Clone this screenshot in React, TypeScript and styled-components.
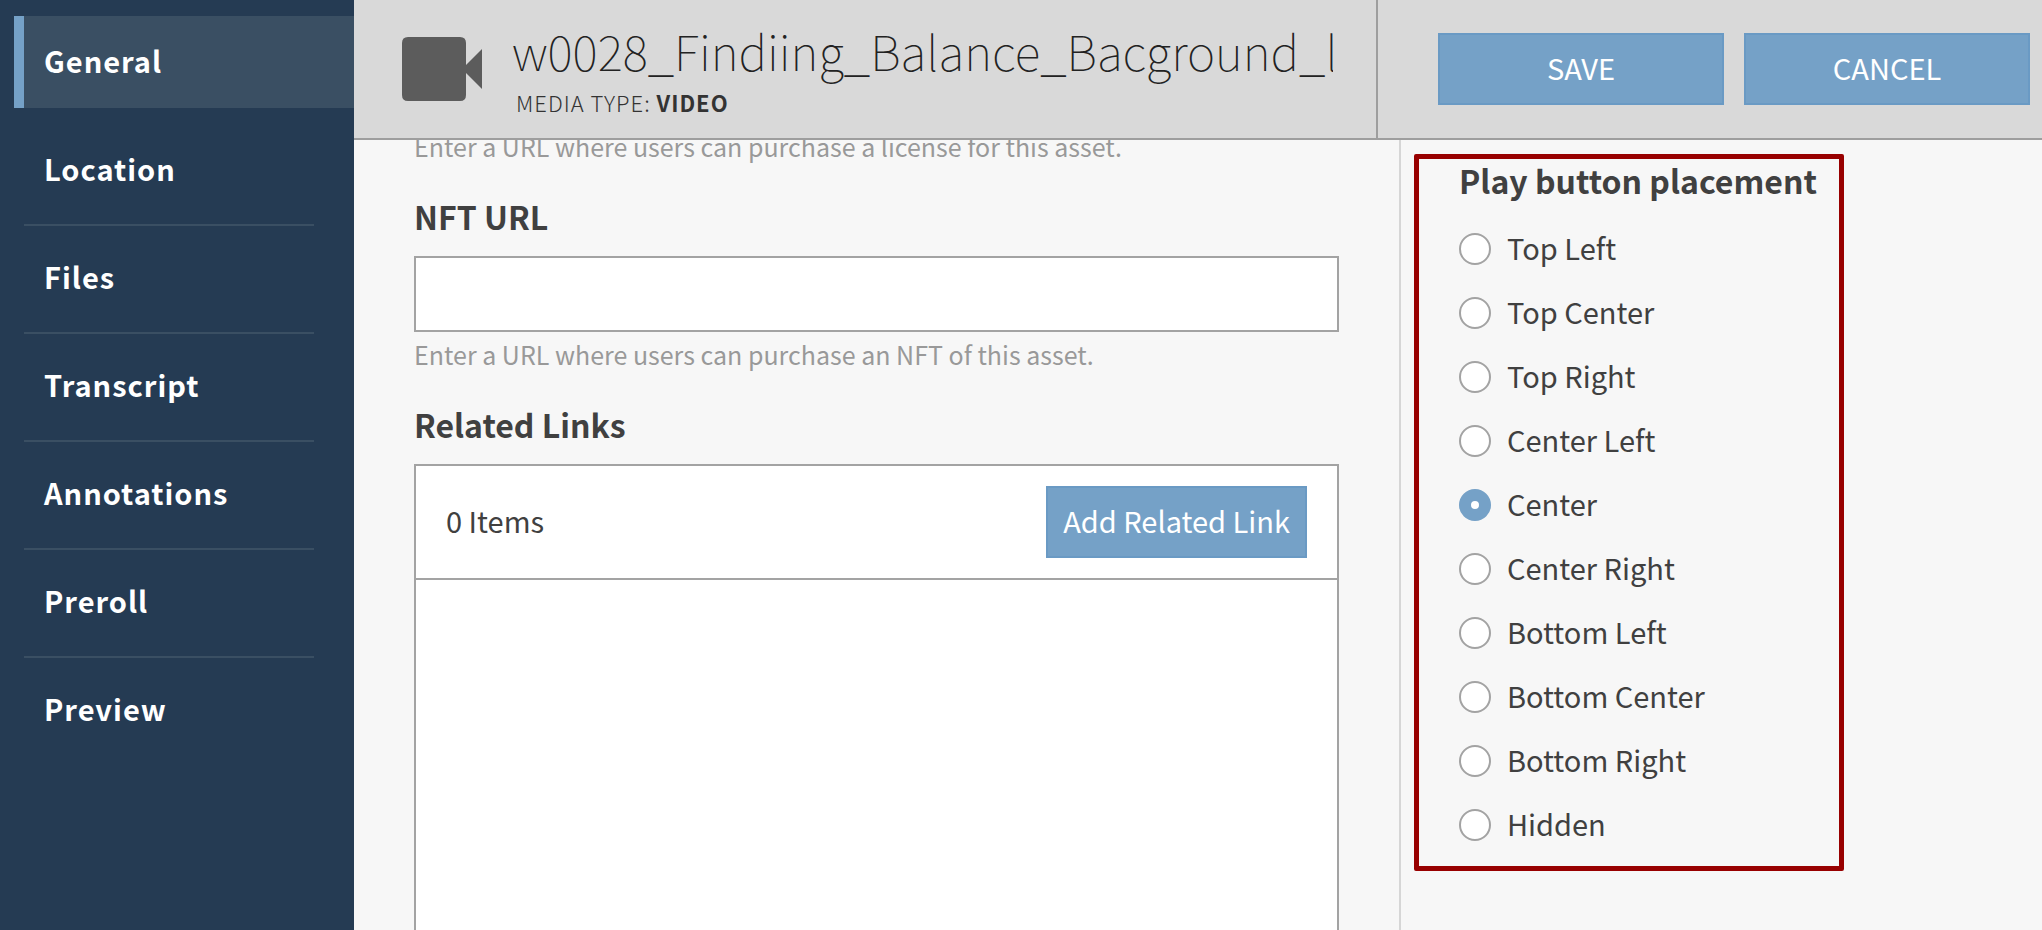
import React, { useState } from "react";
import styled, { createGlobalStyle } from "styled-components";

const colors = {
  navy: "#253b53",
  navyActive: "#3a4f63",
  blue: "#75a1c7",
  blueEdge: "#6a9ac4",
  page: "#f7f7f7",
  header: "#d9d9d9",
  rule: "#a3a3a3",
  softRule: "#d6d6d6",
  text: "#404040",
  muted: "#999999",
  mark: "#980000",
};

const GlobalStyle = createGlobalStyle`
  *, *::before, *::after { box-sizing: border-box; }
  body {
    margin: 0;
    background: ${colors.page};
    color: ${colors.text};
    font-family: "Noto Sans CJK SC", "Open Sans", sans-serif;
    font-size: 29px;
    line-height: 40px;
  }
  button, input { font: inherit; }
`;

const Shell = styled.div`
  display: flex;
  height: 100vh;
  overflow: hidden;
`;

const Sidebar = styled.nav`
  flex: 0 0 354px;
  padding: 16px 0 0 14px;
  background: ${colors.navy};
`;

const NavList = styled.ul`
  list-style: none;
  margin: 0;
  padding: 0;
`;

const NavItem = styled.li<{ $ruled: boolean }>`
  &::after {
    content: "";
    display: block;
    height: 2px;
    margin: 8px 40px 6px 10px;
    background: ${(p) => (p.$ruled ? colors.navyActive : "transparent")};
  }
`;

const NavLink = styled.a<{ $active: boolean }>`
  display: flex;
  align-items: center;
  height: 92px;
  padding: 0 0 4px 20px;
  border-left: 10px solid ${(p) => (p.$active ? colors.blue : "transparent")};
  background: ${(p) => (p.$active ? colors.navyActive : "transparent")};
  background-clip: padding-box;
  color: #fff;
  font-weight: 700;
  letter-spacing: 1px;
  text-decoration: none;
`;

const Workspace = styled.div`
  flex: 1;
  min-width: 0;
  display: flex;
  flex-direction: column;
`;

const Header = styled.header`
  flex: none;
  display: flex;
  height: 140px;
  background: ${colors.header};
  border-bottom: 2px solid #9e9e9e;
`;

const AssetSummary = styled.div`
  flex: 1;
  min-width: 0;
  display: flex;
  gap: 30px;
  padding: 14px 43px 0 48px;
`;

const CameraIcon = styled.svg`
  flex: none;
  width: 80px;
  height: 64px;
  margin-top: 23px;
  fill: #5c5c5c;
`;

const AssetText = styled.div`
  flex: 1;
  min-width: 0;
`;

const TitleInput = styled.input`
  display: block;
  width: 100%;
  height: 72px;
  padding: 0;
  border: 0;
  outline: 0;
  background: transparent;
  color: #222;
  font-size: 48px;
  font-weight: 100;
  line-height: 72px;
`;

const MediaType = styled.p`
  margin: 0;
  padding-left: 4px;
  color: #333;
  font-size: 22px;
  font-weight: 300;
  line-height: 32px;
  letter-spacing: 1px;

  strong { font-weight: 700; }
`;

const Actions = styled.div`
  flex: 0 0 666px;
  display: flex;
  align-items: center;
  gap: 20px;
  padding: 0 12px 0 60px;
  border-left: 2px solid #9e9e9e;
`;

const Button = styled.button<{ $grow?: boolean }>`
  flex: ${(p) => (p.$grow ? "1" : "none")};
  height: 72px;
  padding: 0 15px 4px;
  border: 2px solid ${colors.blueEdge};
  background: ${colors.blue};
  color: #fff;
  white-space: nowrap;
  cursor: pointer;
`;

const Body = styled.div`
  flex: 1;
  min-height: 0;
  display: flex;
`;

const FormColumn = styled.main`
  flex: 1;
  min-width: 0;
  padding: 0 60px;
  overflow: hidden;
`;

const Fields = styled.div`
  display: flex;
  flex-direction: column;
  gap: 32px;
  height: 100%;
  margin-top: -16px;
`;

const Field = styled.div`
  display: flex;
  flex-direction: column;
`;

const Label = styled.label`
  margin-bottom: 20px;
  font-size: 32px;
  font-weight: 700;
`;

const TextInput = styled.input`
  width: 100%;
  height: 76px;
  padding: 0 28px;
  border: 2px solid ${colors.rule};
  border-radius: 0;
  background: #fff;
  color: ${colors.text};
`;

const Hint = styled.p`
  margin: 4px 0 0;
  color: ${colors.muted};
  font-size: 25px;
  line-height: 36px;
`;

const LinksField = styled.section`
  flex: none;
`;

const LinksHeading = styled.h2`
  margin: 0 0 20px;
  font-size: 32px;
  font-weight: 700;
`;

const LinksBox = styled.div`
  min-height: 560px;
  border: 2px solid ${colors.rule};
  background: #fff;
`;

const LinksBar = styled.div`
  display: flex;
  align-items: center;
  justify-content: space-between;
  padding: 20px 30px;
  border-bottom: 2px solid ${colors.rule};
`;

const Caption = styled.span`
  padding-bottom: 4px;
`;

const OptionsColumn = styled.aside`
  flex: 0 0 643px;
  padding: 14px 13px;
  border-left: 2px solid ${colors.softRule};
`;

const Highlight = styled.div`
  width: 430px;
  padding: 0 0 9px 40px;
  border: 5px solid ${colors.mark};
  border-radius: 2px;
`;

const RadioGroup = styled.fieldset`
  margin: 0;
  padding: 0;
  border: 0;
`;

const Legend = styled.legend`
  margin-bottom: 16px;
  padding: 0;
  font-size: 32px;
  font-weight: 700;
  line-height: 42px;
  white-space: nowrap;
`;

const RadioRow = styled.label`
  display: flex;
  align-items: center;
  gap: 16px;
  height: 64px;
  cursor: pointer;
`;

const Radio = styled.input`
  appearance: none;
  flex: none;
  width: 32px;
  height: 32px;
  margin: 0;
  border: 2px solid ${colors.rule};
  border-radius: 50%;
  background: #fff;

  &:checked {
    border: 12px solid ${colors.blue};
  }
`;

const sections = ["General", "Location", "Files", "Transcript", "Annotations", "Preroll", "Preview"];

const placements = [
  "Top Left",
  "Top Center",
  "Top Right",
  "Center Left",
  "Center",
  "Center Right",
  "Bottom Left",
  "Bottom Center",
  "Bottom Right",
  "Hidden",
];

export default function App() {
  const [section, setSection] = useState("General");
  const [placement, setPlacement] = useState("Center");
  const [title, setTitle] = useState("w0028_Findiing_Balance_Bacground_l");

  return (
    <>
      <GlobalStyle />
      <Shell>
        <Sidebar aria-label="Asset sections">
          <NavList>
            {sections.map((name, i) => (
              <NavItem key={name} $ruled={i > 0 && i < sections.length - 1}>
                <NavLink
                  href={`#${name.toLowerCase()}`}
                  $active={name === section}
                  aria-current={name === section ? "page" : undefined}
                  onClick={() => setSection(name)}
                >
                  {name}
                </NavLink>
              </NavItem>
            ))}
          </NavList>
        </Sidebar>

        <Workspace>
          <Header>
            <AssetSummary>
              <CameraIcon viewBox="0 0 80 64" aria-hidden="true">
                <path d="M6 0H58Q64 0 64 6V28L80 12V52L64 36V58Q64 64 58 64H6Q0 64 0 58V6Q0 0 6 0Z" />
              </CameraIcon>
              <AssetText>
                <TitleInput
                  aria-label="Title"
                  value={title}
                  spellCheck={false}
                  onChange={(e) => setTitle(e.target.value)}
                />
                <MediaType>
                  MEDIA TYPE: <strong>VIDEO</strong>
                </MediaType>
              </AssetText>
            </AssetSummary>
            <Actions>
              <Button type="button" $grow>SAVE</Button>
              <Button type="button" $grow>CANCEL</Button>
            </Actions>
          </Header>

          <Body>
            <FormColumn>
              <Fields>
                <Hint>Enter a URL where users can purchase a license for this asset.</Hint>
                <Field>
                  <Label htmlFor="nft-url">NFT URL</Label>
                  <TextInput id="nft-url" type="url" aria-describedby="nft-hint" />
                  <Hint id="nft-hint">Enter a URL where users can purchase an NFT of this asset.</Hint>
                </Field>
                <LinksField>
                  <LinksHeading>Related Links</LinksHeading>
                  <LinksBox>
                    <LinksBar>
                      <Caption>0 Items</Caption>
                      <Button type="button">Add Related Link</Button>
                    </LinksBar>
                  </LinksBox>
                </LinksField>
              </Fields>
            </FormColumn>

            <OptionsColumn>
              <Highlight>
                <RadioGroup>
                  <Legend>Play button placement</Legend>
                  {placements.map((name) => (
                    <RadioRow key={name}>
                      <Radio
                        type="radio"
                        name="placement"
                        value={name}
                        checked={name === placement}
                        onChange={() => setPlacement(name)}
                      />
                      <Caption>{name}</Caption>
                    </RadioRow>
                  ))}
                </RadioGroup>
              </Highlight>
            </OptionsColumn>
          </Body>
        </Workspace>
      </Shell>
    </>
  );
}
